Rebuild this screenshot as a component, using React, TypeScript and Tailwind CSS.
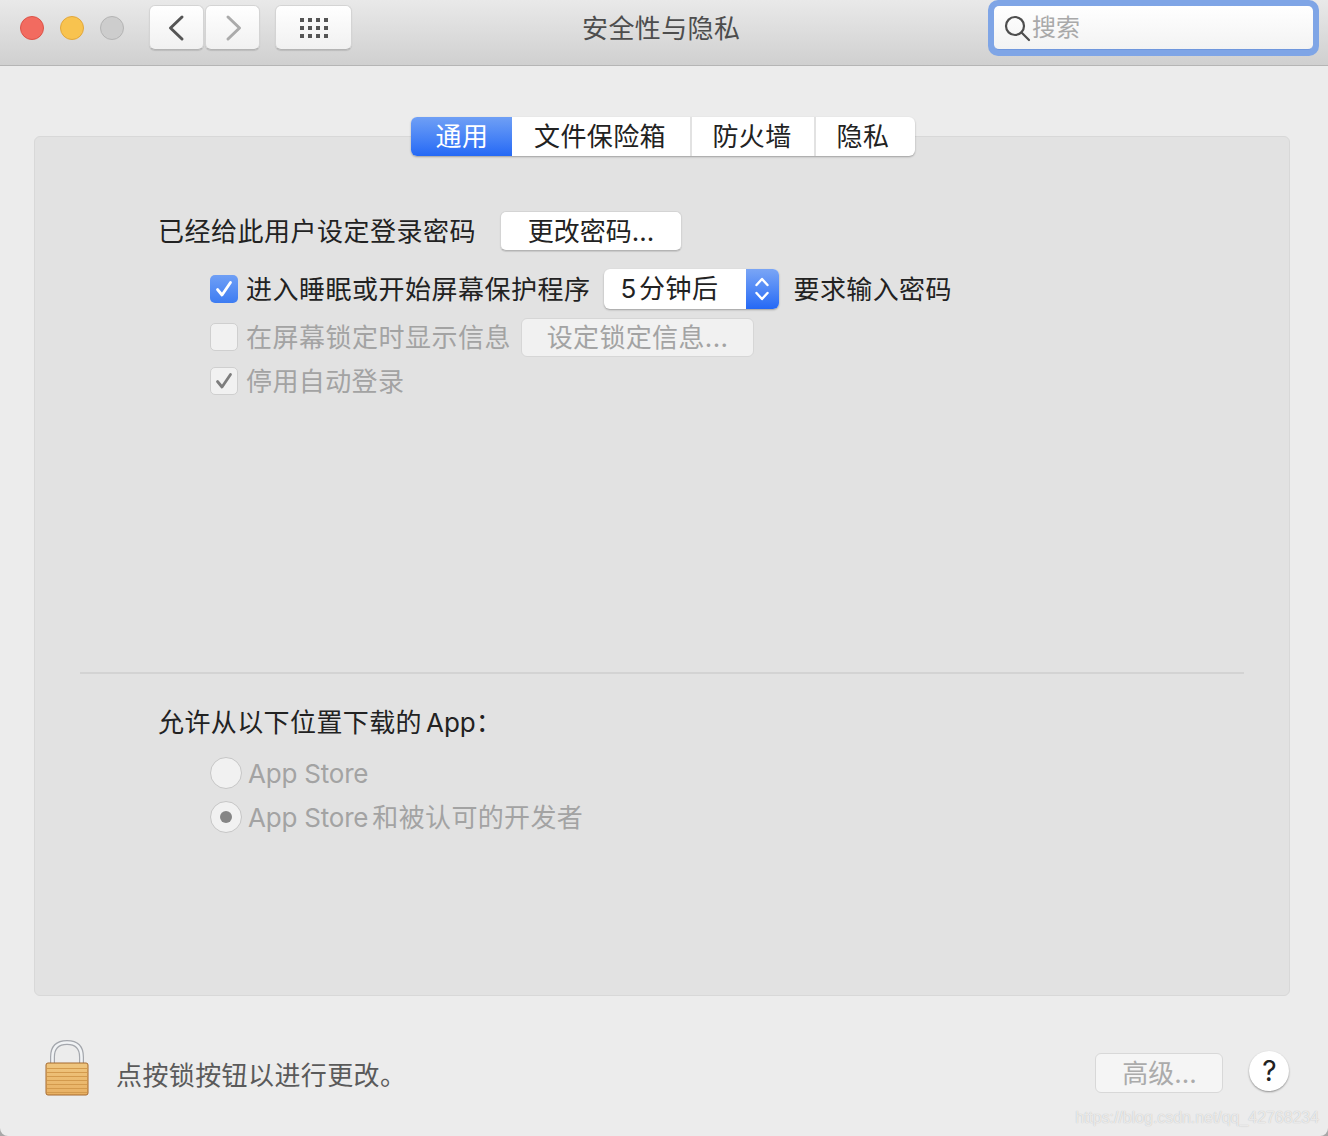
const btn = "flex items-center justify-center bg-white rounded-[6px] border border-[#d4d4d4] border-b-[#b4b4b4] shadow-[0_1px_1px_rgba(0,0,0,0.12)]"

function TitleBar() {
  return (
    <div className="h-[66px] shrink-0 flex items-start border-b border-[#b5b5b5] bg-gradient-to-b from-[#e9e9e9] to-[#d0d0d0]">
      {/* traffic lights */}
      <div className="flex gap-4 ml-5 mt-4">
        <div className="w-6 h-6 rounded-full bg-[#f26b60] border border-[#dc5348]" />
        <div className="w-6 h-6 rounded-full bg-[#f8c34f] border border-[#e2a73c]" />
        <div className="w-6 h-6 rounded-full bg-[#cdcdcd] border border-[#b4b4b4]" />
      </div>
      <div className="flex gap-[1px] ml-[25px] mt-[5px]">
        <div className={`w-[55px] h-[45px] ${btn} bg-gradient-to-b from-white to-[#f1f1f1]`}>
          <svg width="20" height="28" viewBox="0 0 20 28" fill="none" stroke="#555" strokeWidth="3" strokeLinecap="round" strokeLinejoin="round">
            <path d="M15 3 3.5 14 15 25" />
          </svg>
        </div>
        <div className={`w-[55px] h-[45px] ${btn} bg-gradient-to-b from-white to-[#f1f1f1]`}>
          <svg width="20" height="28" viewBox="0 0 20 28" fill="none" stroke="#ababab" strokeWidth="3" strokeLinecap="round" strokeLinejoin="round">
            <path d="M5 3 16.5 14 5 25" />
          </svg>
        </div>
      </div>
      <div className={`w-[77px] h-[45px] ml-[15px] mt-[5px] ${btn} bg-gradient-to-b from-white to-[#f1f1f1]`}>
        <svg width="28" height="20" viewBox="0 0 28 20" fill="#555">
          {[0, 8, 16].map((y) =>
            [0, 8, 16, 24].map((x) => <rect key={`${x}-${y}`} x={x} y={y} width="4" height="4" />)
          )}
        </svg>
      </div>
      <div className="ml-[230px] mt-[10px] w-[158px] text-[26px] leading-[38px] tracking-[0.4px] text-[#4d4d4d] whitespace-nowrap">
        安全性与隐私
      </div>
      {/* search field with focus ring */}
      <div className="ml-[248px] mt-0 w-[331px] h-[56px] rounded-[10px] bg-[#7fa5e6] p-[6px] pr-[6px]">
        <div className="h-[44px] rounded-[5px] bg-gradient-to-b from-white to-[#f3f3f3] flex items-center pl-[10px] border-b border-[#6f97dd]">
          <svg width="28" height="28" viewBox="0 0 28 28" fill="none" stroke="#4e4e4e" strokeWidth="2.2" strokeLinecap="round" className="shrink-0 mt-[2px]">
            <circle cx="11" cy="11" r="9" />
            <path d="M17.5 17.5 25 25" />
          </svg>
          <span className="text-[24px] leading-none text-[#a9a9a9]">搜索</span>
        </div>
      </div>
    </div>
  )
}

function Tabs() {
  return (
    <div className="flex justify-center -mt-[20px] ml-[1px] relative">
      <div className="flex h-[39px] w-[504px] rounded-[6px] bg-white shadow-[0_1px_2px_rgba(0,0,0,0.3)] text-[26px] text-[#222] tracking-[0.4px] overflow-hidden">
        <div className="w-[101px] pl-[2px] flex items-center justify-center bg-gradient-to-b from-[#6f9ff5] to-[#2468f5] text-white">通用</div>
        <div className="w-[180px] pr-[1px] flex items-center justify-center border-r-[2px] border-[#e2e2e2]">文件保险箱</div>
        <div className="w-[124px] pr-[1px] flex items-center justify-center border-r-[2px] border-[#e2e2e2]">防火墙</div>
        <div className="w-[99px] pr-[4px] flex items-center justify-center">隐私</div>
      </div>
    </div>
  )
}

function Check({ variant }: { variant: "on" | "off" | "dim" }) {
  const box =
    variant === "on"
      ? "bg-gradient-to-b from-[#6f9ff5] to-[#3d7cf2]"
      : "bg-[#f1f1f1] border border-[#cfcfcf]"
  return (
    <div className={`w-[28px] h-[28px] rounded-[5px] flex items-center justify-center shrink-0 ${box}`}>
      {variant !== "off" && (
        <svg width="18" height="20" viewBox="0 0 18 20" fill="none" stroke={variant === "on" ? "#fff" : "#7d7d7d"} strokeWidth="2.8" strokeLinecap="round" strokeLinejoin="round">
          <path d="M2.5 10.5 7 16 15.5 3.5" />
        </svg>
      )}
    </div>
  )
}

function Radio({ selected, label, suffix }: { selected?: boolean; label: string; suffix?: string }) {
  return (
    <div className="flex items-center h-[44px]">
      <div className="w-[32px] h-[32px] rounded-full bg-[#f1f1f1] border border-[#c6c6c6] flex items-center justify-center">
        {selected && <div className="w-[12px] h-[12px] rounded-full bg-[#858585]" />}
      </div>
      <span className="ml-[6px] text-[#a3a3a3] tracking-[-0.2px]">{label}</span>
      {suffix && <span className="ml-[4px] text-[#a3a3a3] tracking-[0.35px]">{suffix}</span>}
    </div>
  )
}

function Panel() {
  return (
    <div className="ml-[34px] mr-[38px] mt-[70px] h-[860px] rounded-[6px] bg-[#e2e2e2] border border-[#d8d8d8] flex flex-col">
      <Tabs />
      <div className="flex items-center mt-[55px] ml-[123px] h-[40px] text-[#222]">
        <span className="tracking-[0.5px]">已经给此用户设定登录密码</span>
        <div className={`ml-[24px] w-[182px] h-[40px] ${btn}`}>更改密码...</div>
      </div>

      <div className="flex items-center mt-[18px] ml-[175px] h-[40px] text-[#222]">
        <Check variant="on" />
        <span className="ml-[8px] tracking-[0.5px]">进入睡眠或开始屏幕保护程序</span>
        <div className="ml-[13px] w-[175px] h-[40px] flex rounded-[6px] bg-white shadow-[0_1px_2px_rgba(0,0,0,0.3)] overflow-hidden">
          <span className="flex-1 pl-[17px] leading-[40px] tracking-[0.6px]">5<span className="ml-[2px]">分钟后</span></span>
          <div className="w-[33px] flex items-center justify-center bg-gradient-to-b from-[#7aa5f5] to-[#2468f5]">
            <svg width="16" height="28" viewBox="0 0 16 28" fill="none" stroke="#fff" strokeWidth="2.4" strokeLinecap="round" strokeLinejoin="round">
              <path d="M2.5 10 8 4l5.5 6M2.5 18 8 24l5.5-6" />
            </svg>
          </div>
        </div>
        <span className="ml-[15px] tracking-[0.4px]">要求输入密码</span>
      </div>

      <div className="flex items-center mt-[8px] ml-[175px] h-[40px] text-[#a3a3a3]">
        <Check variant="off" />
        <span className="ml-[8px] tracking-[0.5px]">在屏幕锁定时显示信息</span>
        <div className="ml-[10px] w-[233px] h-[39px] flex items-center justify-center rounded-[6px] bg-[#f1f1f1] border border-[#d6d6d6] tracking-[0.35px]">设定锁定信息...</div>
      </div>

      <div className="flex items-center mt-[4px] ml-[175px] h-[40px] text-[#a3a3a3]">
        <Check variant="dim" />
        <span className="ml-[8px] tracking-[0.4px]">停用自动登录</span>
      </div>

      <div className="mx-[45px] mt-[271px] h-[2px] bg-[#d3d3d3]" />

      <div className="ml-[123px] mt-[29px] h-[40px] leading-[40px] text-[#222] tracking-[0.4px]">允许从以下位置下载的<span className="ml-[4px] tracking-normal">App</span>：</div>
      <div className="ml-[175px] mt-[8px]">
        <Radio label="App Store" />
        <Radio selected label="App Store" suffix="和被认可的开发者" />
      </div>
    </div>
  )
}

function Lock() {
  return (
    <svg width="44" height="56" viewBox="0 0 44 56" className="shrink-0">
      <defs>
        <linearGradient id="body" x1="0" x2="0" y1="0" y2="1">
          <stop offset="0" stopColor="#efc67f" />
          <stop offset="1" stopColor="#e8b063" />
        </linearGradient>
      </defs>
      <path d="M7.5 24V17C7.5 7 13 2.5 22 2.5s14.5 4.5 14.5 14.5v7" fill="none" stroke="#a4a7ad" strokeWidth="5" />
      <path d="M7.5 24V17C7.5 7 13 2.5 22 2.5s14.5 4.5 14.5 14.5v7" fill="none" stroke="#f1f3f5" strokeWidth="2.6" />
      <rect x="1" y="23" width="42" height="32" rx="2" fill="url(#body)" stroke="#a5682c" />
      {[28, 32, 36, 40, 44, 48, 52].map((y) => (
        <rect key={y} x="2" y={y} width="40" height="1" fill="#d39a4d" />
      ))}
    </svg>
  )
}

export default function App() {
  return (
    <div className="w-[1328px] h-[1136px] bg-[#a8a8a8]">
      <div className="h-full overflow-hidden flex flex-col relative rounded-b-[8px] bg-[#ececec] font-['Inter','Noto_Sans_CJK_SC',sans-serif] text-[26px]">
        <TitleBar />
        <Panel />
        <div className="flex items-start ml-[45px] mt-[44px]">
          <Lock />
          <span className="ml-[27px] mt-[17px] text-[#5a5a5a] leading-[38px] tracking-[0.4px]">点按锁按钮以进行更改。</span>
          <div className="ml-[689px] mt-[13px] w-[128px] h-[40px] flex items-center justify-center rounded-[6px] bg-[#f5f5f5] border border-[#d8d8d8] text-[#ababab]">高级...</div>
          <div className="ml-[26px] mt-[11px] w-[40px] h-[40px] rounded-full bg-white shadow-[0_1px_2px_rgba(0,0,0,0.4)] flex items-center justify-center text-[#222] text-[28px]">?</div>
        </div>
        {/* csdn watermark */}
        <span className="absolute right-[9px] bottom-[6px] text-[15.9px] leading-6 text-white/70 font-['Liberation_Sans',sans-serif] [text-shadow:0_0_1px_rgba(0,0,0,0.25)]">https://blog.csdn.net/qq_42768234</span>
      </div>
    </div>
  )
}
